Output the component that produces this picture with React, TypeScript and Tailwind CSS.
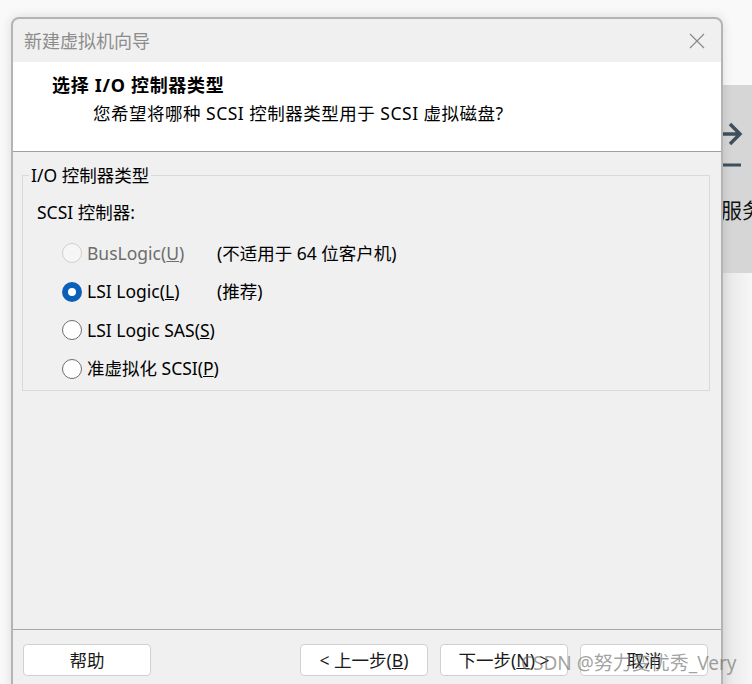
import React from "react";

const font = { fontFamily: '"Noto Sans", "Noto Sans CJK SC", sans-serif' };

function Radio({ state }: { state: "disabled" | "checked" | "off" }) {
  if (state === "checked")
    return (
      <span className="flex h-[20px] w-[20px] shrink-0 items-center justify-center rounded-full bg-[#0a5fb8]">
        <span className="h-[8px] w-[8px] rounded-full bg-white" />
      </span>
    );
  if (state === "disabled")
    return <span className="h-[20px] w-[20px] shrink-0 rounded-full border border-[#cfcfcf] bg-[#f6f6f6]" />;
  return <span className="h-[20px] w-[20px] shrink-0 rounded-full border border-[#6e6e6e] bg-white" />;
}

function Btn({ children, className = "" }: { children: React.ReactNode; className?: string }) {
  return (
    <div
      className={
        "flex h-[32px] w-[128px] items-center justify-center rounded-[4px] border border-[#d0d0d0] bg-white text-[17.5px] text-[#1a1a1a] " +
        className
      }
    >
      {children}
    </div>
  );
}

export default function App() {
  return (
    <div className="relative h-[684px] w-[752px] overflow-hidden bg-[#f9f9f9]" style={font}>
      {/* background app panel */}
      <div className="absolute left-[722px] top-[85px] flex h-[188px] w-[60px] flex-col border-l border-[#b8b8b8] bg-[#d6d6d6]">
        <svg width="22" height="52" viewBox="0 0 22 52" className="mt-[31px]">
          <path d="M0 18 H16 M7 8 L17 18 L7 28" stroke="#3f4f5c" strokeWidth="3.4" fill="none" />
          <path d="M0 49 H18" stroke="#3f4f5c" strokeWidth="3" />
        </svg>
        <div className="ml-[-2px] mt-[30px] whitespace-nowrap text-[21px] leading-[24px] text-[#111]">服务</div>
      </div>
      <div className="absolute left-[722px] top-[273px] h-[420px] w-[40px] bg-gradient-to-r from-[#e6e6e6] to-[#fcfcfc]" />

      {/* dialog window */}
      <div className="absolute left-[11px] top-[17px] flex h-[690px] w-[712px] flex-col overflow-hidden rounded-[8px] border-2 border-[#b4b4b4] bg-[#f0f0f0] shadow-[0_0_12px_rgba(0,0,0,0.12)]">
        {/* title bar */}
        <div className="flex h-[43px] shrink-0 items-center justify-between pl-[11px] pr-[16px]">
          <span className="text-[18px] leading-[24px] text-[#8c8c8c]">新建虚拟机向导</span>
          <svg width="16" height="16" viewBox="0 0 16 16">
            <path d="M1 1 L15 15 M15 1 L1 15" stroke="#8a8a8a" strokeWidth="1.2" />
          </svg>
        </div>
        {/* header */}
        <div className="flex h-[90px] shrink-0 flex-col border-b border-[#a0a0a0] bg-white pl-[39px] pt-[10px]">
          <div className="text-[18px] font-bold leading-[26px] tracking-[0.7px] text-black">选择 I/O 控制器类型</div>
          <div className="ml-[41px] mt-[2px] text-[17.5px] leading-[26px] tracking-[0.5px] text-black">
            您希望将哪种 SCSI 控制器类型用于 SCSI 虚拟磁盘?
          </div>
        </div>
        {/* body */}
        <div className="flex flex-1 flex-col">
          <div className="relative ml-[9px] mr-[11px] mt-[23px] h-[216px] border border-[#d9d9d9]">
            <div className="absolute left-[6px] top-[-13px] bg-[#f0f0f0] px-[2px] text-[17.5px] leading-[24px] text-black">
              I/O 控制器类型
            </div>
            <div className="ml-[14px] mt-[24px] text-[17.5px] leading-[24px] text-black">SCSI 控制器:</div>
            <div className="ml-[39px] mt-[19px] flex flex-col gap-[18.5px]">
              <div className="flex h-[20px] items-center">
                <Radio state="disabled" />
                <span className="ml-[5px] w-[130px] whitespace-nowrap text-[17.5px] text-[#6d6d6d]">
                  BusLogic(<u>U</u>)
                </span>
                <span className="whitespace-nowrap text-[17.5px] text-black">(不适用于 64 位客户机)</span>
              </div>
              <div className="flex h-[20px] items-center">
                <Radio state="checked" />
                <span className="ml-[5px] w-[130px] whitespace-nowrap text-[17.5px] text-black">
                  LSI Logic(<u>L</u>)
                </span>
                <span className="text-[17.5px] text-black">(推荐)</span>
              </div>
              <div className="flex h-[20px] items-center">
                <Radio state="off" />
                <span className="ml-[5px] whitespace-nowrap text-[17.5px] text-black">
                  LSI Logic SAS(<u>S</u>)
                </span>
              </div>
              <div className="flex h-[20px] items-center">
                <Radio state="off" />
                <span className="ml-[5px] whitespace-nowrap text-[17.5px] text-black">
                  准虚拟化 SCSI(<u>P</u>)
                </span>
              </div>
            </div>
          </div>
        </div>
        {/* footer */}
        <div className="flex h-[76px] shrink-0 flex-col border-t border-[#a8a8a8]">
          <div className="ml-[10px] mr-[13px] mt-[14px] flex items-center">
            <Btn>帮助</Btn>
            <div className="flex-1" />
            <Btn>
              &lt; 上一步(<u>B</u>)
            </Btn>
            <Btn className="ml-[12px]">
              下一步(<u>N</u>) &gt;
            </Btn>
            <Btn className="ml-[12px]">取消</Btn>
          </div>
        </div>
      </div>

      {/* watermark */}
      <div className="absolute left-[521px] top-[649px] whitespace-nowrap text-[19px] leading-[28px] text-[rgba(100,100,100,0.6)]">
        CSDN @努力变优秀_Very
      </div>
    </div>
  );
}
